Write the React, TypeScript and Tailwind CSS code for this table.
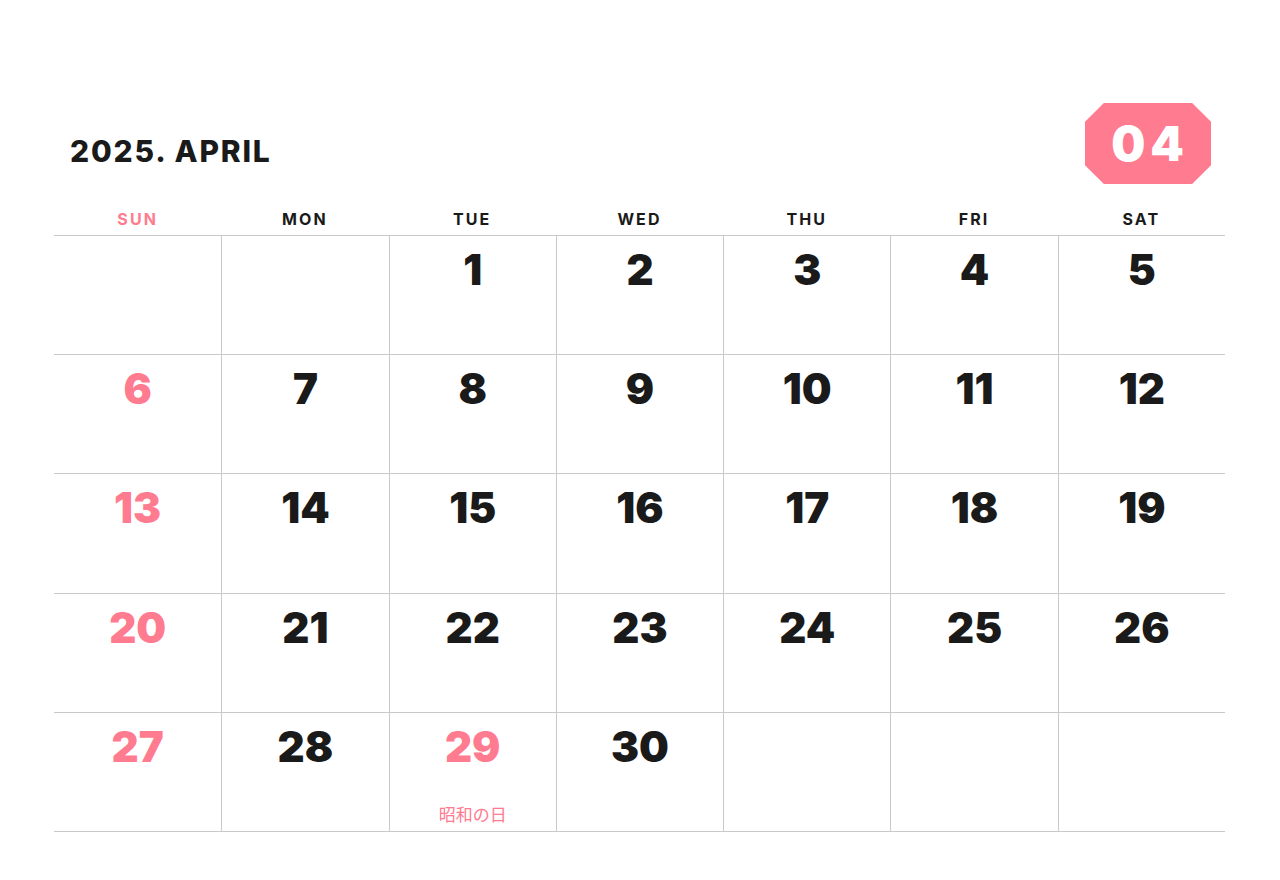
import React from "react";

const weekdays = ["SUN", "MON", "TUE", "WED", "THU", "FRI", "SAT"];

type Day = { n?: number; holiday?: string };

// April 2025 starts on a Tuesday
const days: Day[] = [];
for (let i = 0; i < 2; i++) days.push({});
for (let d = 1; d <= 30; d++) days.push(d === 29 ? { n: d, holiday: "昭和の日" } : { n: d });
while (days.length < 35) days.push({});

export default function App() {
  return (
    <div className="h-[880px] bg-white pr-[55px] pl-[54px] pt-[103px] font-['Inter','Liberation_Sans',sans-serif] text-[#1a1a1a]">
      <div className="flex h-[81px] items-center justify-between">
        <h1 className="pt-[16px] pl-[16px] text-[30px] font-extrabold tracking-[0.06em]">2025. APRIL</h1>
        <div className="mr-[14px] flex h-[81px] w-[126px] items-center justify-center bg-[#ff7b8f] [clip-path:polygon(15%_0,85%_0,100%_23%,100%_77%,85%_100%,15%_100%,0_77%,0_23%)]">
          <span className="pl-[4px] text-[48px] leading-none font-black tracking-[0.1em] text-white">04</span>
        </div>
      </div>

      <div className="grid h-[51px] grid-cols-7 items-end pb-[6px]">
        {weekdays.map((w, i) => (
          <div
            key={w}
            className={`text-center text-[16px] leading-[20px] font-bold tracking-[0.13em] ${i === 0 ? "text-[#ff7b8f]" : "text-[#1a1a1a]"}`}
          >
            {w}
          </div>
        ))}
      </div>

      <div className="grid grid-cols-7 border-t border-[#c9c9cd]">
        {days.map((d, i) => (
          <div
            key={i}
            className={`flex h-[119.2px] flex-col items-center border-b border-[#c9c9cd] pt-[13px] ${i % 7 !== 0 ? "border-l" : ""}`}
          >
            {d.n && (
              <span
                className={`text-[42px] leading-none font-black ${i % 7 === 0 || d.holiday ? "text-[#ff7b8f]" : "text-[#1a1a1a]"}`}
              >
                {d.n}
              </span>
            )}
            {d.holiday && (
              <span className="mt-auto pb-[7px] font-['Noto_Sans_CJK_JP',sans-serif] text-[17px] leading-[20px] text-[#ff7b8f]">
                {d.holiday}
              </span>
            )}
          </div>
        ))}
      </div>
    </div>
  );
}
